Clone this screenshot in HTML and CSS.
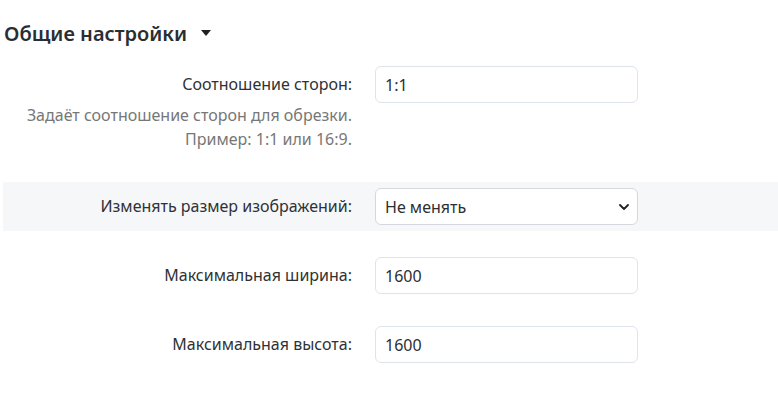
FILE: index.html
```html
<!DOCTYPE html>
<html lang="ru">
  <head>
    <meta charset="UTF-8" />
    <meta name="viewport" content="width=device-width, initial-scale=1.0" />
    <title>Общие настройки</title>
    <link rel="stylesheet" href="styles.css">
  </head>

  <body>
    <div class="settings">
      <h2 class="settings-title">
        Общие настройки
        <span class="caret"></span>
      </h2>

      <div class="settings-row">
        <div class="settings-label">
          <label for="ratio">Соотношение сторон:</label>
          <div class="settings-desc">Задаёт соотношение сторон для обрезки.<br>Пример: 1:1 или 16:9.</div>
        </div>
        <div class="settings-field">
          <input id="ratio" class="field" type="text" value="1:1">
        </div>
      </div>

      <div class="settings-row alt">
        <div class="settings-label">
          <label for="resize">Изменять размер изображений:</label>
        </div>
        <div class="settings-field">
          <div class="select-wrap">
            <select id="resize" class="field">
              <option>Не менять</option>
              <option>Уменьшать</option>
            </select>
            <svg class="chevron" width="10" height="6" viewBox="0 0 10 6">
              <path d="M1 1l4 4 4-4" fill="none" stroke="#222" stroke-width="1.8" stroke-linecap="round" stroke-linejoin="round"/>
            </svg>
          </div>
        </div>
      </div>

      <div class="settings-row">
        <div class="settings-label">
          <label for="maxw">Максимальная ширина:</label>
        </div>
        <div class="settings-field">
          <input id="maxw" class="field" type="text" value="1600">
        </div>
      </div>

      <div class="settings-row">
        <div class="settings-label">
          <label for="maxh">Максимальная высота:</label>
        </div>
        <div class="settings-field">
          <input id="maxh" class="field" type="text" value="1600">
        </div>
      </div>
    </div>
  </body>
</html>
```

FILE: styles.css
```css
body {
  margin: 0;
  background: #fff;
  font-family: "Noto Sans", "Open Sans", sans-serif;
  color: #2e3236;
}

.settings {
  padding: 20px 0 0 3px;
}

.settings-title {
  display: flex;
  align-items: center;
  gap: 14px;
  margin: 0 0 12px 1px;
  font-size: 20px;
  font-weight: 600;
  line-height: 28px;
  color: #2a2e33;
}

.caret {
  width: 0;
  height: 0;
  border-left: 5px solid transparent;
  border-right: 5px solid transparent;
  border-top: 6px solid #222;
  margin-top: -2px;
}

.settings-row {
  display: grid;
  grid-template-columns: 349px 263px;
  column-gap: 23px;
  padding: 6px 0;
  margin-bottom: 20px;
}

.settings-row:first-of-type {
  padding-bottom: 11px;
}

.settings-row.alt {
  background-color: #f6f7f9;
}

.settings-label {
  text-align: right;
  font-size: 16px;
}

.settings-label label {
  display: block;
  line-height: 37px;
}

.settings-desc {
  color: #777;
  line-height: 24px;
}

.field {
  box-sizing: border-box;
  width: 263px;
  height: 37px;
  padding: 0 9px;
  border: 1px solid #dfe4ec;
  border-radius: 6px;
  background: #fff;
  font-family: inherit;
  font-size: 16px;
  color: #2b2f33;
  outline: none;
}

.select-wrap {
  position: relative;
  width: 263px;
}

.select-wrap select {
  appearance: none;
  border-color: #d4d8de;
}

.chevron {
  position: absolute;
  right: 9px;
  top: 16px;
  pointer-events: none;
}
```
